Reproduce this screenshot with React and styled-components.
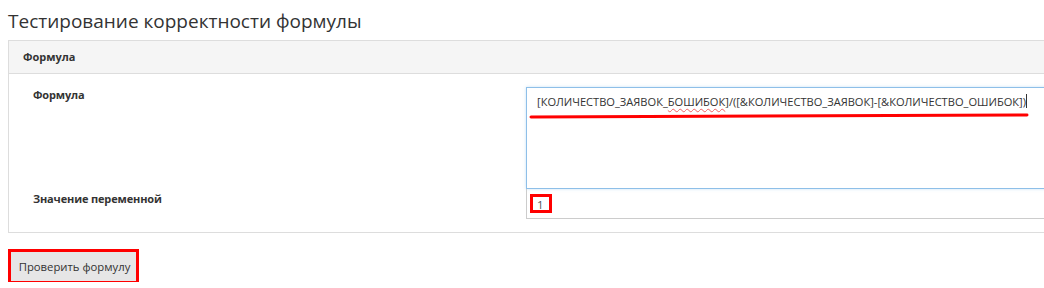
import styled, { createGlobalStyle } from "styled-components";

const Global = createGlobalStyle`
  body {
    margin: 0;
    background: #fff;
    font-family: "Open Sans", "Noto Sans", sans-serif;
    color: #333;
    overflow: hidden;
  }
`

const Page = styled.div`
  padding: 0 0 0 8px;
`
const Title = styled.h2`
  margin: 0;
  height: 40px;
  line-height: 42px;
  font-size: 19px;
  font-weight: 400;
  color: #333;
`
const Panel = styled.div`
  width: 1060px;
  border: 1px solid #ddd;
  box-sizing: border-box;
`
const PanelHeading = styled.div`
  height: 32px;
  line-height: 32px;
  padding-left: 14px;
  background: #f5f5f5;
  border-bottom: 1px solid #ddd;
  font-size: 11px;
  font-weight: 700;
`
const PanelBody = styled.div`
  padding: 13px 0 13px 24px;
  display: flex;
  flex-direction: column;
`
const Row = styled.div`
  display: grid;
  grid-template-columns: 493px 1fr;
`
const Label = styled.label`
  font-size: 11px;
  font-weight: 700;
  line-height: 16px;
  letter-spacing: -0.15px;
  padding-top: ${props => props.$top || 0}px;
`
const Field = styled.div`
  position: relative;
`
const Area = styled.div`
  box-sizing: border-box;
  height: 102px;
  border: 1px solid #8ebfe8;
  box-shadow: 0 0 3px rgba(102, 175, 233, 0.35);
  padding: 5px 10px;
  font-size: 11.1px;
  line-height: 18px;
  color: #333;
`
const Spell = styled.span`
  text-decoration: underline wavy #f06060;
  text-decoration-thickness: 1px;
  text-underline-offset: 2px;
`
const Caret = styled.span`
  display: inline-block;
  width: 1px;
  height: 14px;
  background: #333;
  vertical-align: -2px;
`
const Input = styled.div`
  box-sizing: border-box;
  height: 30px;
  border: 1px solid #ccc;
  border-top: none;
  padding: 0 10px;
  font-size: 11.5px;
  line-height: 32px;
  color: #555;
`
const ButtonWrap = styled.div`
  position: relative;
  display: inline-block;
  margin: 18px 0 0 2px;
`
const Button = styled.button`
  display: block;
  height: 31px;
  width: 127px;
  padding: 0 0 0 2px;
  background: #e6e6e6;
  border: 1px solid #c4c4c4;
  font-family: inherit;
  font-size: 11.3px;
  color: #333;
`
const Mark = styled.div`
  position: absolute;
  border: 3px solid #f00;
  pointer-events: none;
`
const Frame = styled(Mark)`
  inset: -2px;
`
const Stroke = styled.svg`
  position: absolute;
  left: 4px;
  top: 27px;
  overflow: visible;
`

const App = () => {
  return (
    <Page>
      <Global />
      <Title>Тестирование корректности формулы</Title>
      <Panel>
        <PanelHeading>Формула</PanelHeading>
        <PanelBody>
          <Row>
            <Label $top={0}>Формула</Label>
            <Field>
              <Area>
                [КОЛИЧЕСТВО_ЗАЯВОК_<Spell>БОШИБОК</Spell>]/([&amp;КОЛИЧЕСТВО_ЗАЯВОК]-[&amp;КОЛИЧЕСТВО_ОШИБОК])<Caret />
              </Area>
              <Stroke width="500" height="6">
                <path d="M1 3 C120 1.5 300 2.5 497 1" stroke="#f00" strokeWidth="3" fill="none" strokeLinecap="round" />
              </Stroke>
            </Field>
          </Row>
          <Row>
            <Label $top={2}>Значение переменной</Label>
            <Field>
              <Input>1</Input>
              <Mark style={{ left: 4, top: 5, width: 16, height: 13 }} />
            </Field>
          </Row>
        </PanelBody>
      </Panel>
      <ButtonWrap>
        <Button>Проверить формулу</Button>
        <Frame />
      </ButtonWrap>
    </Page>
  )
}

export default App
